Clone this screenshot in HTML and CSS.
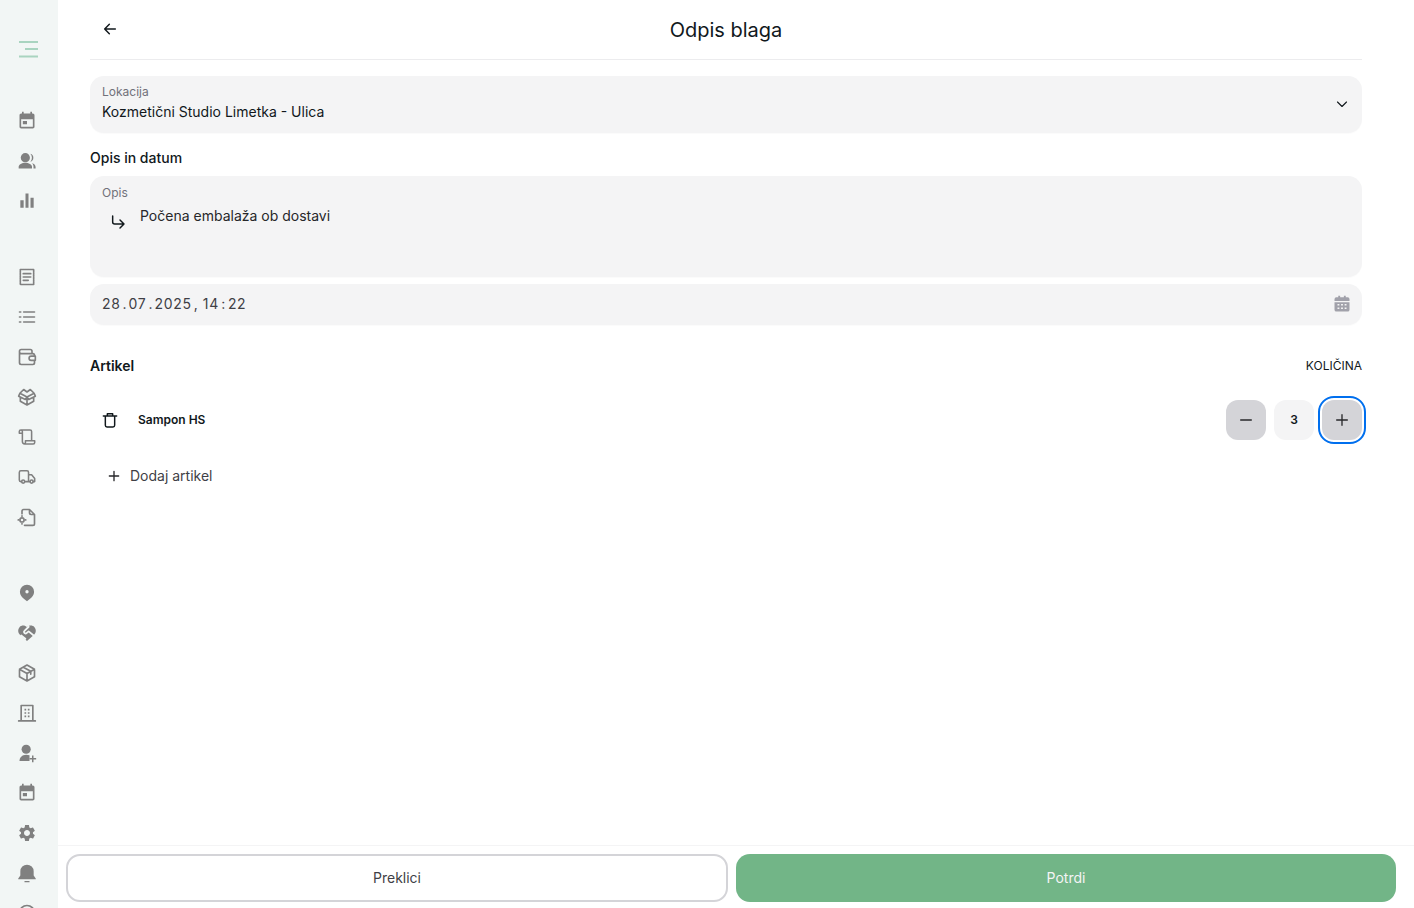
FILE: index.html
```html
<!DOCTYPE html>
<html lang="sl">
<head>
<meta charset="utf-8">
<title>Odpis blaga</title>
<link rel="stylesheet" href="styles.css">
</head>
<body>
<div class="app">
  <aside class="sidebar">
    <div class="nav-row menu-row">
      <svg class="menu-icon" viewBox="0 0 24 24" width="24" height="24"><path d="M2 5h19M8 12h13M2 19.500h19" fill="none" stroke="#a9d4c0" stroke-width="2"/></svg>
    </div>
    <div class="nav-group first">
      <div class="nav-row"><svg viewBox="0 0 24 24" class="ico fill"><path d="M19 3h-1V1h-2v2H8V1H6v2H5c-1.110 0-1.990.9-1.990 2L3 19c0 1.100.89 2 2 2h14c1.100 0 2-.9 2-2V5c0-1.100-.9-2-2-2zm0 16H5V10h14v9zM7 12h5v4H7z"/></svg></div>
      <div class="nav-row"><svg viewBox="0 0 24 24" class="ico fill"><circle cx="10" cy="8" r="5.500"/><path d="M2 21v-2c0-3 4-5 8-5s8 2 8 5v2z"/><path d="M16 3.200a5 5 0 0 1 0 9.600 7 7 0 0 0 0-9.600zM18 14.500c2.500.8 4.300 2.500 4.300 4.700V21h-2.500v-2c0-1.700-.7-3.300-1.800-4.500z"/></svg></div>
      <div class="nav-row"><svg viewBox="0 0 24 24" class="ico fill"><path d="M4 11h4v9H4zM10.200 3h3.600v17h-3.600zM16.200 8H20v12h-3.800z"/></svg></div>
    </div>
    <div class="nav-group">
      <div class="nav-row"><svg viewBox="0 0 24 24" class="ico line"><path d="M4 3h16v18H4z" stroke-dasharray="2 .8"/><path d="M7.500 8h9M7.500 12h9M7.500 16h6"/></svg></div>
      <div class="nav-row"><svg viewBox="0 0 24 24" class="ico line"><path d="M8 6h13M8 12h13M8 18h13M3 6h1.500M3 12h1.500M3 18h1.500"/></svg></div>
      <div class="nav-row"><svg viewBox="0 0 24 24" class="ico line"><path d="M18 7V5a2 2 0 0 0-2-2H5a2 2 0 0 0-2 2v14a2 2 0 0 0 2 2h14a2 2 0 0 0 2-2v-3M3 6a2 2 0 0 0 2 2h14a2 2 0 0 1 2 2v1M21 11h-4a1.500 1.500 0 0 0 0 5h5v-5z"/></svg></div>
      <div class="nav-row"><svg viewBox="0 0 24 24" class="ico line"><path d="M12 12 3.500 7.500 8 3l4 3 4-3 4.500 4.500zM3.500 7.500 2 11l8 4 2-3 2 3 8-4-1.500-3.500M4 12.500V17l8 4.500 8-4.500v-4.500M12 12v9.500"/></svg></div>
      <div class="nav-row"><svg viewBox="-1 -1 26 26" class="ico line"><path d="M18 17V5a2 2 0 0 0-2-2H4M4 3a2 2 0 0 0-2 2v2h4M4 3a2 2 0 0 1 2 2v13a3 3 0 0 0 3 3h11a2 2 0 0 0 2-2v-2H10v2a2 2 0 0 1-2 2"/></svg></div>
      <div class="nav-row"><svg viewBox="-1 -1 26 26" class="ico line"><path d="M5 18H4a2 2 0 0 1-2-2V6a2 2 0 0 1 2-2h8a2 2 0 0 1 2 2v12H9M14 9h4l4 5v4h-2M16 18h-2"/><circle cx="7" cy="18" r="2"/><circle cx="18" cy="18" r="2"/></svg></div>
      <div class="nav-row"><svg viewBox="0 0 24 24" class="ico line"><path d="M6 8V5a2 2 0 0 1 2-2h7l6 6v11a2 2 0 0 1-2 2H9M15 3v4a2 2 0 0 0 2 2h4"/><circle cx="6" cy="15.500" r="2.500"/><path d="M6 10.500v.5M6 20v.5M1.500 15.500H2M10 15.500h.5"/></svg></div>
    </div>
    <div class="nav-group">
      <div class="nav-row"><svg viewBox="0 0 24 24" class="ico fill"><path fill-rule="evenodd" d="M12 2a8.500 8.500 0 0 0-8.500 8.500c0 5 4.500 8.500 8.500 11.500 4-3 8.500-6.500 8.500-11.500A8.500 8.500 0 0 0 12 2zm0 6.500a2 2 0 1 1 0 4 2 2 0 0 1 0-4z"/></svg></div>
      <div class="nav-row"><svg viewBox="0 0 24 24" class="ico fill"><path d="M12 21.500 3.500 14C.8 11.500.8 7.500 3 5c2.500-2.500 6.500-2.500 9 .2 2.500-2.700 6.500-2.700 9-.2 2.200 2.500 2.200 6.500-.5 9z"/><path class="crack" d="M14 4.500 9 9.500c-1.500 1.500 0 3.500 2 3l3-2.500 6 5M5 15l5 4"/></svg></div>
      <div class="nav-row"><svg viewBox="0 0 24 24" class="ico line"><path d="M12 2.500 3 7.500v9l9 5 9-5v-9zM3 7.500l9 5 9-5M12 12.500v9M7.500 5l9 5v3.500"/></svg></div>
      <div class="nav-row"><svg viewBox="0 0 24 24" class="ico line"><path d="M5 21.500V3h14v18.500M2 21.500h20"/><path class="dots" d="M9 7h2v2H9zM13 7h2v2h-2zM9 11h2v2H9zM13 11h2v2h-2zM9 15h2v2H9zM13 15h2v2h-2z"/></svg></div>
      <div class="nav-row"><svg viewBox="0 0 24 24" class="ico fill"><circle cx="11" cy="7.500" r="5.500"/><path d="M3 21.500c0-4 3-7.500 8-7.500 1.500 0 2.800.3 4 .8v6.700z"/><path d="M18 15h1.800v3H23v1.800h-3.200V23H18v-3.200h-3V18h3z"/></svg></div>
      <div class="nav-row"><svg viewBox="0 0 24 24" class="ico fill"><path d="M19 3h-1V1h-2v2H8V1H6v2H5c-1.110 0-1.990.9-1.990 2L3 19c0 1.100.89 2 2 2h14c1.100 0 2-.9 2-2V5c0-1.100-.9-2-2-2zm0 16H5V10h14v9zM7 12h5v4H7z"/></svg></div>
      <div class="nav-row"><svg viewBox="0 0 24 24" class="ico fill"><path d="M19.140 12.940c.04-.3.06-.61.06-.94 0-.32-.02-.64-.07-.94l2.030-1.580c.18-.14.23-.41.12-.61l-1.920-3.320c-.12-.22-.37-.29-.59-.22l-2.390.96c-.5-.38-1.030-.7-1.620-.94l-.36-2.540c-.04-.24-.24-.41-.48-.41h-3.840c-.24 0-.43.17-.47.41l-.36 2.540c-.59.24-1.130.57-1.620.94l-2.390-.96c-.22-.08-.47 0-.59.22L2.740 8.870c-.12.21-.08.47.12.61l2.030 1.580c-.05.3-.09.63-.09.94s.02.64.07.94l-2.030 1.580c-.18.14-.23.41-.12.61l1.920 3.320c.12.22.37.29.59.22l2.390-.96c.5.38 1.030.7 1.620.94l.36 2.540c.05.24.24.41.48.41h3.840c.24 0 .44-.17.47-.41l.36-2.540c.59-.24 1.130-.56 1.620-.94l2.390.96c.22.08.47 0 .59-.22l1.920-3.320c.12-.22.07-.47-.12-.61l-2.010-1.580zM12 15.600c-1.980 0-3.600-1.620-3.600-3.600s1.620-3.600 3.600-3.600 3.600 1.620 3.600 3.600-1.620 3.600-3.600 3.600z"/></svg></div>
      <div class="nav-row"><svg viewBox="0 0 24 24" class="ico fill"><path d="M12 2a8 8 0 0 0-8 8v5L1.500 18.500v1h21v-1L20 15v-5a8 8 0 0 0-8-8zM9 21.500h6V23H9z"/></svg></div>
      <div class="nav-row"><svg viewBox="0 0 24 24" class="ico line"><circle cx="12" cy="12" r="9"/></svg></div>
    </div>
  </aside>

  <main class="main">
    <div class="content">
      <header class="topbar">
        <button class="back" aria-label="Nazaj"><svg viewBox="0 0 24 24" width="16" height="16" class="dark-line"><path d="M20 12H4M11 5l-7 7 7 7"/></svg></button>
        <h1 class="title">Odpis blaga</h1>
      </header>

      <div class="field select-field">
        <div class="select-text">
          <div class="field-label">Lokacija</div>
          <div class="field-value">Kozmetični Studio Limetka - Ulica</div>
        </div>
        <svg viewBox="0 0 24 24" width="12" height="12" class="dark-line chevron"><path d="M3 8l9 9 9-9"/></svg>
      </div>

      <h2 class="section-title">Opis in datum</h2>

      <div class="field text-field">
        <div class="field-label">Opis</div>
        <div class="text-body">
          <svg viewBox="0 0 24 24" width="16" height="16" class="dark-line arrow"><path d="M4 3v9a3 3 0 0 0 3 3h14M15 9l6 6-6 6"/></svg>
          <span class="text-value">Počena embalaža ob dostavi</span>
        </div>
      </div>

      <div class="field date-field">
        <span class="date-value">28<span class="sep">.</span>07<span class="sep">.</span>2025<span class="sep comma">,</span>14<span class="sep colon">:</span>22</span>
        <svg viewBox="0 0 24 24" width="18" height="18" class="cal"><path fill-rule="evenodd" d="M7 1h2.500v2h5V1H17v2h2.500A2.500 2.500 0 0 1 22 5.500V8H2V5.500A2.500 2.500 0 0 1 4.500 3H7zM2 9.500h20v10a2.500 2.500 0 0 1-2.500 2.500h-15A2.500 2.500 0 0 1 2 19.500zM6 12v2h2.500v-2zm4.750 0v2h2.500v-2zM15.500 12v2H18v-2zM6 16.500v2h2.500v-2zm4.750 0v2h2.500v-2zm4.750 0v2H18v-2z"/></svg>
      </div>

      <div class="items-head">
        <span class="items-title">Artikel</span>
        <span class="items-qty">KOLIČINA</span>
      </div>

      <div class="item-row">
        <div class="item-left">
          <svg viewBox="0 0 24 24" width="16" height="16" class="dark-line trash"><path d="M2 6h20M8 6V2.500h8V6M5 6v14a2.500 2.500 0 0 0 2.500 2.500h9A2.500 2.500 0 0 0 19 20V6"/></svg>
          <span class="item-name">Sampon HS</span>
        </div>
        <div class="stepper">
          <button class="step"><svg viewBox="0 0 24 24" width="16" height="16" class="dark-line thin"><path d="M4 12h16"/></svg></button>
          <div class="qty"><span class="qty-num">3</span></div>
          <button class="step focused"><svg viewBox="0 0 24 24" width="16" height="16" class="dark-line thin"><path d="M4 12h16M12 4v16"/></svg></button>
        </div>
      </div>

      <div class="add-row">
        <svg viewBox="0 0 24 24" width="16" height="16" class="dark-line thin"><path d="M5 12h14M12 5v14"/></svg>
        <span class="add-label">Dodaj artikel</span>
      </div>
    </div>

    <footer class="footer">
      <button class="btn cancel">Preklici</button>
      <button class="btn confirm">Potrdi</button>
    </footer>
  </main>
</div>
</body>
</html>
```
FILE: styles.css
```css
* { box-sizing: border-box; }
html, body { margin: 0; height: 100%; overflow: hidden; }
body { font-family: Inter, "Noto Sans", sans-serif; color: #11181c; background: #fff; }
button { font-family: inherit; border: 0; cursor: pointer; }

.app { display: flex; height: 908px; overflow: hidden; }

.sidebar { width: 58px; flex: none; background: #f2f6f5; padding-top: 29px; overflow: hidden; }
.nav-row { height: 40px; display: flex; align-items: center; padding-left: 17px; }
.nav-group { margin-top: 36px; }
.nav-group.first { margin-top: 32px; }
.ico { width: 20px; height: 20px; display: block; }
.ico.fill { fill: #808080; }
.ico.line { fill: none; stroke: #808080; stroke-width: 2; stroke-linejoin: round; stroke-linecap: round; }
.ico .dots { fill: #808080; stroke: none; }
.ico .crack { fill: none; stroke: #f2f6f5; stroke-width: 2.200; stroke-linecap: round; stroke-linejoin: round; }

.main { flex: 1; min-width: 0; display: flex; flex-direction: column; }
.content { flex: 1; padding: 0 52px 0 32px; }

.topbar { height: 60px; border-bottom: 1px solid #ececee; display: flex; align-items: center; justify-content: center; position: relative; }
.back { position: absolute; left: 12px; top: 21px; width: 16px; height: 16px; padding: 0; background: none; display: flex; }
.title { margin: 1px 0 0; font-size: 20px; line-height: 28px; font-weight: 400; color: #11181c; }

.dark-line { fill: none; stroke: #11181c; stroke-width: 2.200; stroke-linecap: round; stroke-linejoin: round; display: block; }
.dark-line.thin { stroke-width: 2; stroke: #27272a; }

.field { background: #f4f4f5; border-radius: 14px; padding: 0 12px; box-shadow: 0 1px 1px rgba(0,0,0,.02); }
.select-field { margin-top: 16px; height: 57px; display: flex; align-items: center; justify-content: space-between; padding-right: 14px; }
.select-text { padding-bottom: 3px; }
.field-label { font-size: 12px; line-height: 16px; color: #71717a; }
.field-value { font-size: 14px; line-height: 20px; margin-top: 2px; color: #11181c; }
.chevron { margin-bottom: 2px; }

.section-title { margin: 16px 0 0; font-size: 14px; line-height: 18px; font-weight: 500; color: #11181c; }

.text-field { margin-top: 9px; height: 101px; padding-top: 9px; }
.text-body { display: flex; align-items: flex-start; margin-top: 5px; padding-left: 8px; }
.arrow { margin-top: 8px; }
.text-value { font-size: 14px; line-height: 20px; margin-left: 14px; color: #27272a; }

.date-field { margin-top: 7px; height: 41px; display: flex; align-items: center; justify-content: space-between; padding-right: 11px; }
.date-value { font-size: 14px; line-height: 20px; letter-spacing: .7px; color: #3f3f46; padding-bottom: 2px; }
.sep { display: inline-block; width: 8px; text-align: center; letter-spacing: 0; }
.sep.comma { width: 11px; text-align: left; padding-left: 2px; }
.sep.colon { width: 9px; }
.cal { display: block; fill: #a1a1aa; margin-bottom: 2px; }

.items-head { margin-top: 31px; height: 18px; display: flex; align-items: center; justify-content: space-between; }
.items-title { font-size: 14px; font-weight: 600; color: #11181c; }
.items-qty { font-size: 12px; color: #11181c; }

.item-row { margin-top: 26px; height: 40px; display: flex; align-items: center; justify-content: space-between; }
.item-left { display: flex; align-items: center; padding-left: 12px; }
.item-name { margin-left: 20px; font-size: 12px; font-weight: 600; color: #11181c; padding-bottom: 2px; }
.stepper { display: flex; gap: 8px; }
.step { width: 40px; height: 40px; border-radius: 12px; background: #d4d4d8; padding: 0; display: flex; align-items: center; justify-content: center; }
.step.focused { outline: 2px solid #006fee; outline-offset: 2px; }
.qty { width: 40px; height: 40px; border-radius: 12px; background: #f4f4f5; display: flex; align-items: center; justify-content: center; font-size: 12px; font-weight: 600; }
.qty-num { padding-bottom: 2px; }

.add-row { margin-top: 16px; height: 40px; padding-left: 16px; display: flex; align-items: center; gap: 8px; font-size: 14px; color: #3f3f46; }
.add-label { padding-bottom: 2px; }

.footer { height: 63px; flex: none; border-top: 1px solid #f4f4f5; padding: 8px 18px 6px 8px; display: flex; gap: 8px; }
.btn { height: 48px; border-radius: 14px; font-size: 14px; padding: 0 0 2px; }
.cancel { flex: 0 0 662px; background: #fff; border: 2px solid #d4d4d8; color: #3f3f46; }
.confirm { flex: 1; background: #72b587; color: #f4f4f5; }
```
